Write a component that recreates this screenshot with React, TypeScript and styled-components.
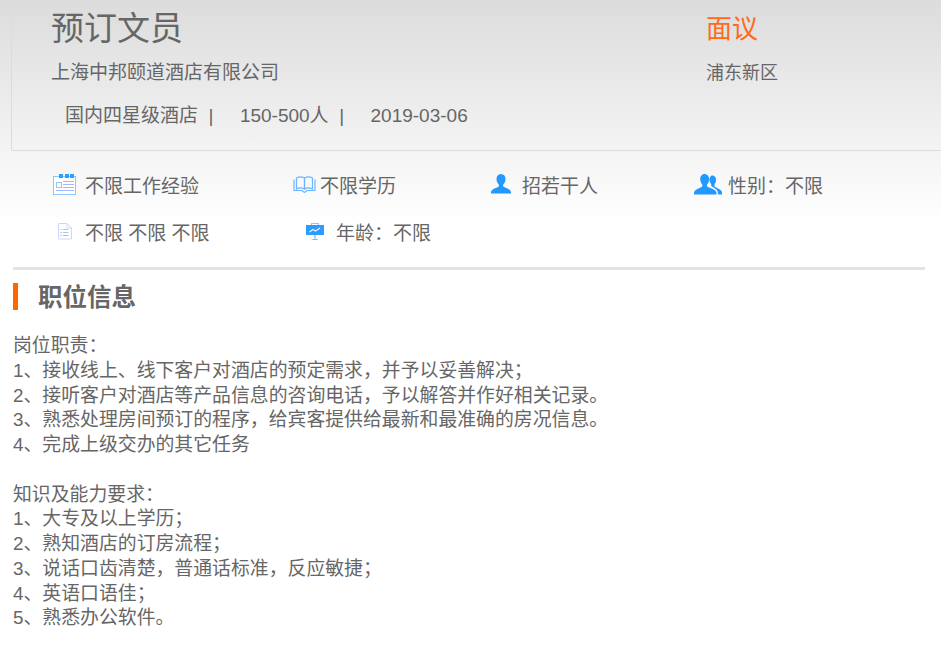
import React from 'react'
import styled, { createGlobalStyle } from 'styled-components'

const GlobalStyle = createGlobalStyle`
    html, body {
        margin: 0;
        padding: 0;
        background: #fff;
        overflow: hidden;
    }
    body {
        font-family: "Liberation Sans", "Noto Sans CJK SC", sans-serif;
        color: #666;
    }
`

const Page = styled.div`
    width: 941px;
    height: 656px;
    overflow: hidden;
`

const Top = styled.div`
    height: 267px;
    padding-left: 11px;
    box-sizing: border-box;
    background: linear-gradient(to bottom, #dcdcdc 0, #fff 222px);
`

const Head = styled.div`
    height: 151px;
    box-sizing: border-box;
    border-left: 1px solid #dcdcdc;
    border-bottom: 1px solid #dcdcdc;
    padding: 1px 0 0 39px;
    display: flex;
`

const HeadLeft = styled.div`
    width: 655px;
`

const HeadRight = styled.div`
    flex: 1;
`

const Title = styled.h1`
    margin: 0;
    height: 56px;
    line-height: 56px;
    font-size: 33px;
    font-weight: 400;
    color: #666;
`

const Salary = styled.div`
    height: 56px;
    line-height: 56px;
    font-size: 26px;
    color: #ff6a1a;
`

const SubLine = styled.div<{ $size: number }>`
    margin-top: 1px;
    line-height: 30px;
    font-size: ${p => p.$size}px;
    color: #666;
`

const Tags = styled.div`
    margin-top: 13px;
    padding-left: 14px;
    line-height: 30px;
    font-size: 19px;
    color: #666;
    white-space: pre;
`

const InfoRow = styled.div<{ $top: number }>`
    display: flex;
    align-items: center;
    height: 30px;
    margin-top: ${p => p.$top}px;
    font-size: 19px;
    color: #666;
`

const InfoItem = styled.div<{ $left: number; $width: number; $gap: number }>`
    display: flex;
    align-items: center;
    gap: ${p => p.$gap}px;
    margin-left: ${p => p.$left}px;
    width: ${p => p.$width}px;
    white-space: pre;
`

const Divider = styled.div`
    height: 3px;
    width: 912px;
    margin-left: 13px;
    background: #e4e4e4;
`

const SectionTitle = styled.h2`
    margin: 13px 0 0 13px;
    height: 27px;
    line-height: 29px;
    padding-left: 20px;
    border-left: 5px solid #ff6600;
    font-size: 24.5px;
    font-weight: 700;
    color: #666;
`

const Body = styled.div`
    margin: 24px 0 0 13px;
    font-size: 18.88px;
    line-height: 24.75px;
    color: #666;
    white-space: pre-line;
`

const CalendarIcon = () => (
    <svg width="23" height="21" viewBox="0 0 23 21">
        <rect x="0.5" y="2.5" width="22" height="18" fill="#fff" stroke="#8cc8ff" />
        <rect x="6" y="0" width="4" height="4" fill="#2ba0ff" />
        <rect x="12" y="0" width="4" height="4" fill="#2ba0ff" />
        <rect x="17" y="0" width="4" height="4" fill="#2ba0ff" />
        <rect x="3.5" y="8.5" width="5" height="5" fill="none" stroke="#8cc8ff" />
        <path d="M10 7.5h11M10 10.5h11M10 13.5h11M3 16.5h18" stroke="#a8b4ff" />
    </svg>
)

const BookIcon = () => (
    <svg width="23" height="17" viewBox="0 0 23 17" fill="none" stroke="#6db5ff" strokeWidth="1.2">
        <path d="M3.500 2C6 0.500 9 0.500 11.500 2V13C9 11.500 6 11.500 3.500 13Z" />
        <path d="M19.500 2C17 0.500 14 0.500 11.500 2V13C14 11.500 17 11.500 19.500 13Z" />
        <path d="M1 3.500V14.500H9L11.500 16.500L14 14.500H22V3.500" />
    </svg>
)

const UserIcon = () => (
    <svg width="20" height="20" viewBox="0 0 20 20" fill="#2398ff">
        <path d="M10 0C7 0 5.500 2.200 5.500 5C5.500 7.500 6.500 9.500 7.800 10.500V12.500C6 14 1 14.500 0 18V19.500H20V18C19 14.500 14 14 12.200 12.500V10.500C13.500 9.500 14.500 7.500 14.500 5C14.500 2.200 13 0 10 0Z" />
    </svg>
)

const UsersIcon = () => (
    <svg width="28" height="21" viewBox="0 0 28 21" fill="#2398ff">
        <path d="M18.500 1.500C16.500 1.500 15.500 3.500 15.500 5.500C15.500 7.500 16.300 9 17.200 10V12C18.500 13.500 24 14.500 24 19.500V20.500H28V18C27 15 22 14 20.500 12.500V10C21.500 9 22 7.500 22 5.500C22 3.500 20.500 1.500 18.500 1.500Z" />
        <path d="M10.500 0C8 0 6.200 2.200 6.200 5C6.200 7.500 7.200 9.500 8.300 10.500V12.500C6.500 14 1 15 0 18.500V20.500H22.500V18.500C21.500 15 15.500 14 13 12.500V10.500C14.200 9.500 15.200 7.500 15.200 5C15.200 2.200 13 0 10.500 0Z" />
    </svg>
)

const DocIcon = () => (
    <svg width="16" height="17" viewBox="0 0 16 17" fill="none">
        <path d="M1.500 0.500H10L14.500 5V16H1.500Z" stroke="#cdd6ff" />
        <path d="M10 0.500V5H14.500" stroke="#cdd6ff" />
        <path d="M6 6.500H11M6 9.500H11.500M6 12.500H11.500" stroke="#9cc8ff" />
        <path d="M3.500 6.500H4.500M3.500 9.500H4.500M3.500 12.500H4.500" stroke="#5aaeff" />
    </svg>
)

const BoardIcon = () => (
    <svg width="18" height="17" viewBox="0 0 18 17" fill="none">
        <rect x="5.500" y="0.500" width="7" height="2" stroke="#a9b9ff" />
        <rect x="0" y="2" width="18" height="10" fill="#2b9bff" />
        <path d="M3.500 9L7 6.500L9.500 8L14 5" stroke="#e6f3ff" strokeWidth="1.200" />
        <path d="M9 12V15.500M6.500 16.500H11.500" stroke="#6fb6ff" strokeWidth="1.200" />
    </svg>
)

// fullwidth punctuation, written as escapes so it stays fullwidth
const COLON = '\uFF1A'
const COMMA = '\uFF0C'
const SEMI = '\uFF1B'

const duty = [
    `岗位职责${COLON}`,
    `1、接收线上、线下客户对酒店的预定需求${COMMA}并予以妥善解决${SEMI}`,
    `2、接听客户对酒店等产品信息的咨询电话${COMMA}予以解答并作好相关记录。`,
    `3、熟悉处理房间预订的程序${COMMA}给宾客提供给最新和最准确的房况信息。`,
    '4、完成上级交办的其它任务',
    '',
    `知识及能力要求${COLON}`,
    `1、大专及以上学历${SEMI}`,
    `2、熟知酒店的订房流程${SEMI}`,
    `3、说话口齿清楚${COMMA}普通话标准${COMMA}反应敏捷${SEMI}`,
    `4、英语口语佳${SEMI}`,
    '5、熟悉办公软件。',
].join('\n')

export default function App() {
    return (
        <Page>
            <GlobalStyle />
            <Top>
                <Head>
                    <HeadLeft>
                        <Title>预订文员</Title>
                        <SubLine $size={19}>上海中邦颐道酒店有限公司</SubLine>
                        <Tags>{'国内四星级酒店  |     150-500人  |     2019-03-06'}</Tags>
                    </HeadLeft>
                    <HeadRight>
                        <Salary>面议</Salary>
                        <SubLine $size={18}>浦东新区</SubLine>
                    </HeadRight>
                </Head>
                <InfoRow $top={18}>
                    <InfoItem $left={42} $width={240} $gap={9}><CalendarIcon />不限工作经验</InfoItem>
                    <InfoItem $left={0} $width={198} $gap={4}><BookIcon />不限学历</InfoItem>
                    <InfoItem $left={0} $width={203} $gap={11}><UserIcon />招若干人</InfoItem>
                    <InfoItem $left={0} $width={200} $gap={6}><UsersIcon />性别{COLON}不限</InfoItem>
                </InfoRow>
                <InfoRow $top={17}>
                    <InfoItem $left={46} $width={249} $gap={12}><DocIcon />不限 不限 不限</InfoItem>
                    <InfoItem $left={0} $width={300} $gap={12}><BoardIcon />年龄{COLON}不限</InfoItem>
                </InfoRow>
            </Top>
            <Divider />
            <SectionTitle>职位信息</SectionTitle>
            <Body>{duty}</Body>
        </Page>
    )
}
